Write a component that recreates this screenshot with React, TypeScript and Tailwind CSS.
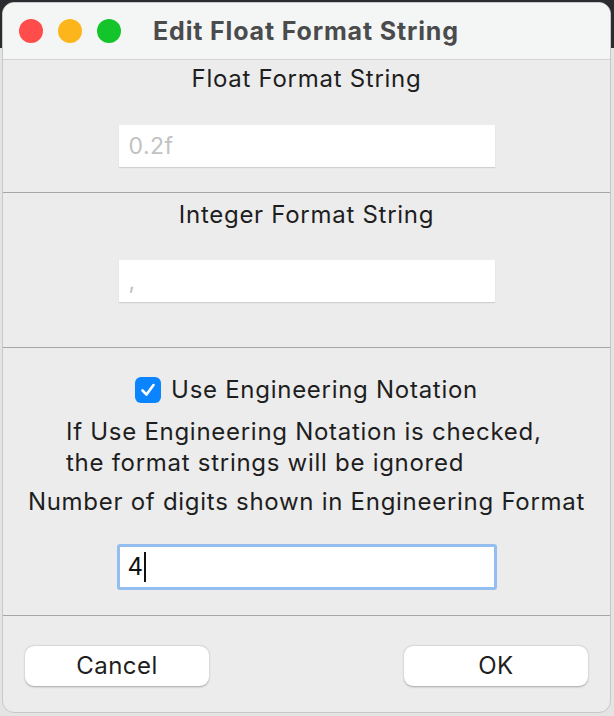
import React from "react";

const font = { fontFamily: "Inter, 'Liberation Sans', sans-serif" };

export default function App() {
  return (
    <div className="w-[614px] h-[716px] bg-[#e4e4e4] relative overflow-hidden" style={font}>
      <div className="absolute left-0 top-0 w-[614px] h-[48px] bg-[#2a2c2f]" />
      <div className="relative ml-[2px] mt-[2px] w-[609px] h-[711px] bg-[#ececec] rounded-[12px] overflow-hidden border border-[#c8c8c8] flex flex-col">
        {/* title bar */}
        <div className="h-[57px] shrink-0 bg-[#f4f5f5] border-b border-[#d3d3d3] flex items-center relative">
          <div className="flex items-center gap-[15px] pl-[16px]">
            <div className="w-[24px] h-[24px] rounded-full bg-[#fe4d4a]" />
            <div className="w-[24px] h-[24px] rounded-full bg-[#fdb51c]" />
            <div className="w-[24px] h-[24px] rounded-full bg-[#13c52b]" />
          </div>
          <div className="ml-[32px] text-[25px] font-bold text-[#4a4b4c] leading-none tracking-[0.85px]">
            Edit Float Format String
          </div>
        </div>

        {/* section 1 */}
        <div className="flex flex-col items-center pt-[5px] pb-[25px] border-b border-[#a6a6a6]">
          <div className="h-[28px] leading-[28px] text-[24px] tracking-[0.72px] text-[#1e1e1e]">Float Format String</div>
          <div className="mt-[32px] w-[376px] h-[42px] bg-white shadow-[0_1px_1px_rgba(0,0,0,0.12)] flex items-center pl-[10px] text-[23px] tracking-[0.5px] text-[#c2c2c2]">
            0.2f
          </div>
        </div>

        {/* section 2 */}
        <div className="flex flex-col items-center pt-[8px] pb-[45px] border-b border-[#a6a6a6]">
          <div className="h-[28px] leading-[28px] text-[24px] tracking-[0.72px] text-[#1e1e1e]">Integer Format String</div>
          <div className="mt-[31px] w-[376px] h-[42px] bg-white shadow-[0_1px_1px_rgba(0,0,0,0.12)] flex items-center pl-[10px] text-[23px] text-[#c2c2c2]">
            ,
          </div>
        </div>

        {/* section 3 */}
        <div className="flex flex-col pt-[28px] pb-[25px] border-b border-[#a6a6a6]">
          <div className="h-[28px] flex items-center justify-center gap-[10px]">
            <div className="w-[26px] h-[26px] rounded-[6px] bg-[#0a84ff] flex items-center justify-center">
              <svg width="18" height="18" viewBox="0 0 18 18">
                <path d="M3.5 9.5 L7.5 13.5 L14.5 4" fill="none" stroke="white" strokeWidth="2.6" strokeLinecap="round" strokeLinejoin="round" />
              </svg>
            </div>
            <div className="text-[24px] tracking-[0.72px] text-[#1e1e1e] leading-[28px]">Use Engineering Notation</div>
          </div>
          <div className="mt-[12px] pl-[63px] text-[24px] tracking-[0.72px] leading-[31px] text-[#1e1e1e]">
            <div>If Use Engineering Notation is checked,</div>
            <div>the format strings will be ignored</div>
          </div>
          <div className="mt-[9px] text-center text-[24px] tracking-[0.72px] leading-[30px] text-[#1e1e1e] whitespace-nowrap">
            Number of digits shown in Engineering Format
          </div>
          <div className="mt-[27px] self-center w-[380px] h-[46px] bg-white rounded-[3px] border-[3px] border-[#94bdf0] flex items-center pl-[8px] text-[24px] text-[#111]">
            4<span className="inline-block w-[2px] h-[30px] bg-[#111] ml-[1px]" />
          </div>
        </div>

        {/* buttons */}
        <div className="flex justify-between px-[22px] pt-[30px]">
          <button className="w-[184px] h-[40px] bg-white rounded-[9px] shadow-[0_0.5px_2px_rgba(0,0,0,0.3)] text-[24px] tracking-[0.5px] text-[#1e1e1e]">
            Cancel
          </button>
          <button className="w-[184px] h-[40px] bg-white rounded-[9px] shadow-[0_0.5px_2px_rgba(0,0,0,0.3)] text-[24px] tracking-[0.5px] text-[#1e1e1e]">
            OK
          </button>
        </div>
      </div>
    </div>
  );
}
